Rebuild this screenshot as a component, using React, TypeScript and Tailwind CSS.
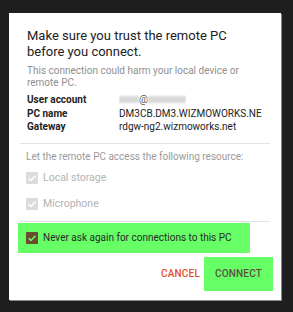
import React from "react";

const Check = ({ color }: { color: string }) => (
  <svg viewBox="0 0 12 12" className="w-[10px] h-[10px]">
    <path d="M2 6.2 L4.8 9 L10 3.2" fill="none" stroke={color} strokeWidth="1.8" />
  </svg>
);

const InfoRow = ({ label, value }: { label: string; value: React.ReactNode }) => (
  <div className="flex h-[13.5px] items-center">
    <div className="w-[92px] font-bold text-[#222]">{label}</div>
    <div className="text-[#222] whitespace-nowrap overflow-hidden">{value}</div>
  </div>
);

export default function App() {
  return (
    <div
      className="w-[293px] h-[312px] bg-[#1e1e1e] pt-[13px] pl-[9px]"
      style={{ fontFamily: "Roboto, 'Liberation Sans', sans-serif" }}
    >
      <div className="w-[272px] h-[287px] bg-white shadow-[1px_1px_0_#8a8a8a] flex flex-col">
        <div className="pl-[18px] pr-[10px] pt-[15px] text-[13px] leading-[16px] text-[#212121]">
          Make sure you trust the remote PC
          <br />
          before you connect.
        </div>
        <div className="pl-[18px] pr-[12px] mt-[5px] text-[10px] leading-[11.5px] text-[#8f8f8f]">
          This connection could harm your local device or
          <br />
          remote PC.
        </div>
        <div className="pl-[18px] mt-[5px] text-[10px]">
          <InfoRow
            label="User account"
            value={
              <span className="flex items-center">
                <span className="inline-block w-[20px] h-[7px] bg-[#d8d8d8] blur-[1px]" />
                <span className="text-[#555]">@</span>
                <span className="inline-block w-[38px] h-[7px] bg-[#d8d8d8] blur-[1px]" />
              </span>
            }
          />
          <InfoRow label="PC name" value="DM3CB.DM3.WIZMOWORKS.NE" />
          <InfoRow label="Gateway" value="rdgw-ng2.wizmoworks.net" />
        </div>
        <div className="mx-[11px] mt-[9px] h-px bg-[#e3e3e3]" />
        <div className="pl-[17px] mt-[7px] text-[10px] leading-[12px] text-[#9a9a9a]">
          Let the remote PC access the following resource:
        </div>
        <div className="pl-[17px] mt-[8px] flex items-center h-[14px]">
          <span className="w-[12px] h-[12px] rounded-[1px] bg-[#dcdcdc] flex items-center justify-center">
            <Check color="#ffffff" />
          </span>
          <span className="ml-[5px] text-[10.5px] text-[#b3b3b3]">Local storage</span>
        </div>
        <div className="pl-[17px] mt-[12px] flex items-center h-[14px]">
          <span className="w-[12px] h-[12px] rounded-[1px] bg-[#dcdcdc] flex items-center justify-center">
            <Check color="#ffffff" />
          </span>
          <span className="ml-[5px] text-[10.5px] text-[#b3b3b3]">Microphone</span>
        </div>
        <div className="mx-[11px] mt-[10px] h-px bg-[#e3e3e3]" />
        <div className="ml-[9px] mt-[1px] w-[232px] h-[30px] bg-[#66ff66] flex items-center pl-[8px]">
          <span className="w-[12px] h-[12px] rounded-[1px] bg-[#6b4a2f] flex items-center justify-center">
            <Check color="#66ff66" />
          </span>
          <span className="ml-[5px] text-[10px] text-[#2a2a2a] whitespace-nowrap">
            Never ask again for connections to this PC
          </span>
        </div>
        <div className="mt-[4px] flex justify-end items-center pr-[8px]">
          <button className="mr-[4px] text-[10px] font-medium text-[#e2502d] tracking-[0.2px]">CANCEL</button>
          <button className="w-[69px] h-[34px] bg-[#66ff66] text-[10px] font-medium text-[#5a5040] tracking-[0.2px]">
            CONNECT
          </button>
        </div>
      </div>
    </div>
  );
}
